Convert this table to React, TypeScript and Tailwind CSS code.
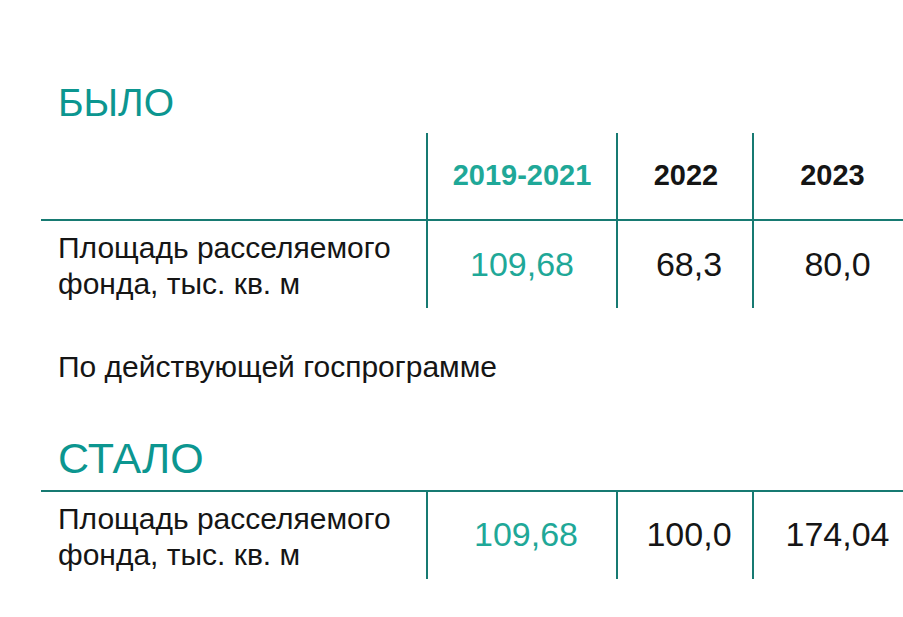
const line = 'border-[#177a72]';

function Label() {
  return (
    <div className="flex flex-col justify-center pl-[17px] pt-[2px] text-[30px] leading-[36px] text-[#151515]">
      <span>Площадь расселяемого</span>
      <span>фонда, тыс. кв. м</span>
    </div>
  );
}

export default function App() {
  return (
    <div className="h-[617px] w-[903px] bg-white font-['Liberation_Sans',Arial,sans-serif]">
      <h2 className="pl-[58px] pt-[79px] text-[39px] leading-[48px] text-[#0c9690]">БЫЛО</h2>

      {/* before */}
      <div className="ml-[41px] mt-[6px] grid grid-cols-[385px_190px_136px_151px]">
        <div className={`h-[88px] border-b-2 ${line}`} />
        <div className={`flex h-[88px] items-center justify-center border-b-2 border-l-2 ${line} pb-[1px] text-[29px] font-bold text-[#1fa898]`}>
          2019-2021
        </div>
        <div className={`flex h-[88px] items-center justify-center border-b-2 border-l-2 ${line} pb-[1px] pl-[2px] text-[29px] font-bold text-[#151515]`}>
          2022
        </div>
        <div className={`flex h-[88px] items-center justify-center border-b-2 border-l-2 ${line} pb-[1px] pl-[8px] text-[29px] font-bold text-[#151515]`}>
          2023
        </div>

        <Label />
        <div className={`flex h-[87px] items-center justify-center border-l-2 ${line} pb-[1px] text-[34px] text-[#1fa898]`}>
          109,68
        </div>
        <div className={`flex h-[87px] items-center justify-center border-l-2 ${line} pb-[1px] pl-[8px] text-[34px] text-[#151515]`}>
          68,3
        </div>
        <div className={`flex h-[87px] items-center justify-center border-l-2 ${line} pb-[1px] pl-[18px] text-[34px] text-[#151515]`}>
          80,0
        </div>
      </div>

      <p className="mt-[41px] pl-[58px] text-[30px] leading-[36px] text-[#151515]">По действующей госпрограмме</p>

      <h2 className="mt-[49px] pl-[58px] text-[43px] leading-[48px] text-[#0c9690]">СТАЛО</h2>

      {/* after */}
      <div className={`ml-[41px] mt-[8px] grid grid-cols-[385px_190px_136px_151px] border-t-2 ${line}`}>
        <Label />
        <div className={`flex h-[87px] items-center justify-center border-l-2 ${line} pb-[2px] pl-[8px] text-[34px] text-[#1fa898]`}>
          109,68
        </div>
        <div className={`flex h-[87px] items-center justify-center border-l-2 ${line} pb-[2px] pl-[8px] text-[34px] text-[#151515]`}>
          100,0
        </div>
        <div className={`flex h-[87px] items-center justify-center border-l-2 ${line} pb-[2px] pl-[18px] text-[34px] text-[#151515]`}>
          174,04
        </div>
      </div>
    </div>
  );
}
